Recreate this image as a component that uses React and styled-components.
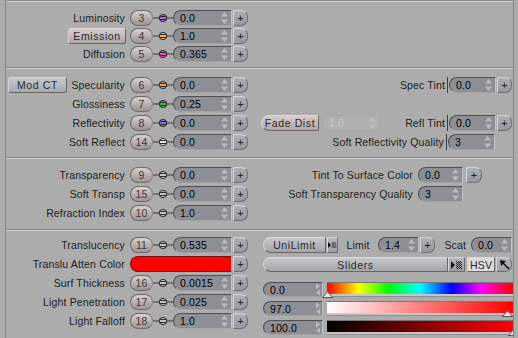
import React from "react";
import styled, { createGlobalStyle } from "styled-components";

const GlobalStyle = createGlobalStyle`
  html, body {
    margin: 0;
    padding: 0;
    background: #acacac;
  }
  body {
    font-family: "Liberation Sans", Arial, sans-serif;
    font-size: 10.5px;
    letter-spacing: 0.15px;
    color: #1c1c1c;
  }
`;

const Panel = styled.div`
  margin-left: 5px;
  width: 509px;
  height: 338px;
  box-sizing: border-box;
  border-left: 1px solid #868686;
  border-right: 1px solid #868686;
  overflow: hidden;
`;

const Section = styled.section`
  display: flex;
  align-items: flex-start;
  border-top: 1px solid #888;
  box-shadow: inset 0 1px #d0d0d0;
  padding: ${(p) => p.$pt}px 0 ${(p) => p.$pb}px;
`;

const LeftCol = styled.div`
  flex: none;
  width: 244px;
  box-sizing: border-box;
  padding-right: 2px;
  display: flex;
  flex-direction: column;
  gap: ${(p) => p.$gap}px;
`;

const RightCol = styled.div`
  flex: 1;
  box-sizing: border-box;
  padding: 0 ${(p) => p.$pr || 0}px 0 ${(p) => p.$pl || 0}px;
  display: flex;
  flex-direction: column;
  gap: ${(p) => p.$gap}px;
`;

const Row = styled.div`
  display: flex;
  align-items: center;
  justify-content: flex-end;
  height: ${(p) => p.$h || 16}px;
`;

const StartRow = styled(Row)`
  justify-content: flex-start;
`;

const Label = styled.span`
  white-space: nowrap;
  margin-right: ${(p) => (p.$mr === undefined ? 5 : p.$mr)}px;
  line-height: 16px;
`;

const FixedLabel = styled.span`
  flex: none;
  width: ${(p) => p.$w}px;
  box-sizing: border-box;
  padding-right: ${(p) => p.$pr || 0}px;
  text-align: ${(p) => p.$align || "center"};
  white-space: nowrap;
`;

const Pill = styled.div`
  flex: none;
  width: 23px;
  height: 16px;
  box-sizing: border-box;
  border-radius: 8px;
  border: 1px solid #6f6a6a;
  border-right-color: #8c8686;
  background: linear-gradient(#d8d0d0, #b4aaaa 60%, #9e9494);
  color: #3a3a3a;
  display: flex;
  align-items: center;
  justify-content: center;
  font-size: 10.5px;
`;

const Field = styled.div`
  flex: none;
  width: ${(p) => p.$w}px;
  height: ${(p) => p.$h || 16}px;
  box-sizing: border-box;
  border-radius: 8px 0 0 8px;
  border: 1px solid #4e5054;
  border-right-color: #c2c2c2;
  border-bottom-color: #a2a2a4;
  background: ${(p) => (p.$disabled ? "#b0b0b0" : "#8d8f94")};
  ${(p) => p.$disabled && "border-color: #a8a8a8; border-right-color: #a8a8a8;"}
  color: ${(p) => (p.$disabled ? "#cbcbcb" : "#000")};
  display: flex;
  align-items: center;
  padding-left: 6px;
  margin-right: ${(p) => p.$mr || 0}px;
  margin-left: ${(p) => p.$ml || 0}px;
`;

const FieldValue = styled.span`
  flex: 1;
  white-space: nowrap;
`;

const Plus = styled.div`
  flex: none;
  width: ${(p) => p.$w || 15}px;
  height: 16px;
  box-sizing: border-box;
  border-radius: 2px 7px 7px 2px;
  border: 1px solid #6c6e72;
  border-top-color: #d6d6d8;
  border-left-color: #d6d6d8;
  background: linear-gradient(#aeb0b4, #96989c);
  color: #222;
  display: flex;
  align-items: center;
  justify-content: center;
  font-size: 11px;
  margin-left: ${(p) => (p.$ml === undefined ? 1 : p.$ml)}px;
`;

const Spacer = styled.div`
  flex: none;
  width: ${(p) => p.$w || 0}px;
`;

const Bracket = styled.div`
  flex: none;
  width: 1px;
  height: 16px;
  background: #3c3c3c;
  margin-right: 1px;
`;

const Swatch = styled.div`
  flex: none;
  width: 102px;
  height: 16px;
  box-sizing: border-box;
  border-radius: 8px 0 0 8px;
  border: 1px solid #7a1010;
  border-right-color: #ff9090;
  background: #ff0000;
`;

const TextButton = styled.div`
  flex: none;
  width: ${(p) => p.$w}px;
  height: ${(p) => p.$h || 16}px;
  box-sizing: border-box;
  border: 1px solid #6a6666;
  border-top-color: #e0dada;
  border-left-color: #d8d2d2;
  border-radius: ${(p) => p.$radius || "3px"};
  background: ${(p) =>
    p.$tone === "blue"
      ? "linear-gradient(#c4c8ce, #a6aab2)"
      : p.$tone === "grey"
      ? "linear-gradient(#c6c8cc, #a2a4a8)"
      : p.$tone === "light"
      ? "#dedada"
      : "linear-gradient(#d6cccc, #b0a6a6)"};
  color: #2a2a2a;
  display: flex;
  align-items: center;
  justify-content: center;
  white-space: nowrap;
  letter-spacing: ${(p) => (p.$tight ? 0.2 : 0.6)}px;
  margin-left: ${(p) => p.$ml || 0}px;
  margin-right: ${(p) => p.$mr || 0}px;
`;

const IconButton = styled.div`
  flex: none;
  width: ${(p) => p.$w}px;
  height: ${(p) => p.$h || 16}px;
  box-sizing: border-box;
  border: 1px solid #6c6e72;
  border-top-color: #d6d6d8;
  border-left-color: #d6d6d8;
  border-radius: ${(p) => p.$radius || "1px"};
  background: linear-gradient(#b6b8bc, #9c9ea2);
  display: flex;
  align-items: center;
  justify-content: center;
  margin-left: ${(p) => p.$ml || 0}px;
`;

const SliderRow = styled.div`
  display: flex;
  align-items: flex-start;
  height: 15px;
  gap: 4px;
`;

const BarWrap = styled.div`
  position: relative;
  flex: 1;
  height: 15px;
`;

const Bar = styled.div`
  height: 12px;
  box-sizing: border-box;
  border-top: 1px solid #777;
  background: ${(p) => p.$bg};
`;

const Track = styled.div`
  height: 2px;
  background: #c6c6c6;
  border-bottom: 1px solid #8e8e8e;
`;

const Marker = styled.svg`
  position: absolute;
  top: 9px;
  width: 11px;
  height: 7px;
`;

const Spin = () => (
  <svg width="9" height="14" viewBox="0 0 9 14" style={{ marginRight: 2 }}>
    <polygon points="4.5,1 8,5.5 1,5.5" fill="#b9bbbf" />
    <polygon points="1,8.5 8,8.5 4.5,13" fill="#b9bbbf" />
  </svg>
);

const SideArrows = () => (
  <svg width="7" height="13" viewBox="0 0 7 13" style={{ marginRight: 1 }}>
    <polygon points="2,0.5 6,3.5 2,6.5" fill="#b9bbbf" />
    <polygon points="6,6.5 2,9.5 6,12.5" fill="#b9bbbf" />
  </svg>
);

const Connector = ({ color }) => (
  <svg width="20" height="16" viewBox="0 0 20 16" style={{ flex: "none" }}>
    <line x1="0" y1="8" x2="20" y2="8" stroke="#3a3a3a" strokeWidth="1" />
    <ellipse cx="10" cy="8" rx="3.8" ry="3.6" fill={color} stroke="#2c2c2c" strokeWidth="1" />
    <line x1="6.5" y1="6.5" x2="13.5" y2="6.5" stroke="#2c2c2c" strokeWidth="1" />
    <line x1="6.5" y1="9.5" x2="13.5" y2="9.5" stroke="#2c2c2c" strokeWidth="1" />
  </svg>
);

const ScopeIcon = () => {
  const dots = [];
  for (let x = 0; x < 6; x++)
    for (let y = 0; y < 8; y++)
      if ((x + y) % 2 === 0)
        dots.push(<rect key={`${x}-${y}`} x={5 + x} y={1 + y} width="1" height="1" fill="#222" />);
  return (
    <svg width="12" height="10" viewBox="0 0 12 10">
      <polygon points="0,1 4,5 0,9" fill="#111" />
      {dots}
    </svg>
  );
};

const PickIcon = () => (
  <svg width="11" height="11" viewBox="0 0 11 11">
    <line x1="10" y1="10" x2="3" y2="3" stroke="#111" strokeWidth="1.6" />
    <polygon points="1,1 7,2 2,7" fill="#111" />
  </svg>
);

const ValueField = ({ value, w, h, disabled, mr, ml }) => (
  <Field $w={w} $h={h} $disabled={disabled} $mr={mr} $ml={ml}>
    <FieldValue>{value}</FieldValue>
    <Spin />
  </Field>
);

const Channel = ({ label, pre, num, color, value }) => (
  <Row>
    {pre}
    {label && <Label>{label}</Label>}
    <Pill>{num}</Pill>
    <Connector color={color} />
    <ValueField value={value} w={59} />
    <Plus>+</Plus>
  </Row>
);

const Slider = ({ value, pct, bg }) => (
  <SliderRow>
    <Field $w={60} $h={15}>
      <FieldValue>{value}</FieldValue>
      <SideArrows />
    </Field>
    <BarWrap>
      <Bar $bg={bg} />
      <Track />
      <Marker viewBox="0 0 11 7" style={{ left: `calc(${pct}% - 5px)` }}>
        <polygon points="0.5,6.5 5.5,0.5 10.5,6.5" fill="#e4e4e4" stroke="#555" strokeWidth="1" />
      </Marker>
    </BarWrap>
  </SliderRow>
);

const grey = "#c4c4c4";

export default function App() {
  return (
    <>
      <GlobalStyle />
      <Panel>
        <Section $pt={9} $pb={5}>
          <LeftCol $gap={2}>
            <Channel label="Luminosity" num="3" color="#b860e8" value="0.0" />
            <Channel
              pre={<TextButton $w={58} $mr={4}>Emission</TextButton>}
              num="4"
              color="#ecb868"
              value="1.0"
            />
            <Channel label="Diffusion" num="5" color="#e850b8" value="0.365" />
          </LeftCol>
          <RightCol $gap={2} />
        </Section>

        <Section $pt={9} $pb={7}>
          <LeftCol $gap={3}>
            <Row>
              <TextButton $w={59} $tone="blue" $ml={2} style={{ marginRight: "auto" }}>
                Mod CT
              </TextButton>
              <Label>Specularity</Label>
              <Pill>6</Pill>
              <Connector color="#ec9a6a" />
              <ValueField value="0.0" w={59} />
              <Plus>+</Plus>
            </Row>
            <Channel label="Glossiness" num="7" color="#40b450" value="0.25" />
            <Channel label="Reflectivity" num="8" color="#7878d8" value="0.0" />
            <Channel label="Soft Reflect" num="14" color="#e6e6e6" value="0.0" />
          </LeftCol>
          <RightCol $gap={3} $pr={1}>
            <Row>
              <Label $mr={2}>Spec Tint</Label>
              <Bracket />
              <ValueField value="0.0" w={47} />
              <Plus>+</Plus>
            </Row>
            <Row />
            <Row>
              <TextButton $w={58} $ml={11} $radius="8px 2px 2px 8px">Fade Dist</TextButton>
              <ValueField value="1.0" w={58} disabled ml={3} />
              <Spacer style={{ marginRight: "auto" }} />
              <Label $mr={2}>Refl Tint</Label>
              <Bracket />
              <ValueField value="0.0" w={47} />
              <Plus>+</Plus>
            </Row>
            <Row>
              <Label $mr={2}>Soft Reflectivity Quality</Label>
              <Bracket />
              <ValueField value="3" w={47} />
              <Spacer $w={17} />
            </Row>
          </RightCol>
        </Section>

        <Section $pt={9} $pb={8}>
          <LeftCol $gap={3}>
            <Channel label="Transparency" num="9" color={grey} value="0.0" />
            <Channel label="Soft Transp" num="15" color={grey} value="0.0" />
            <Channel label="Refraction Index" num="10" color={grey} value="1.0" />
          </LeftCol>
          <RightCol $gap={3} $pr={31}>
            <Row>
              <Label>Tint To Surface Color</Label>
              <ValueField value="0.0" w={45} />
              <Plus $w={16} $ml={3}>+</Plus>
            </Row>
            <Row>
              <Label>Soft Transparency Quality</Label>
              <ValueField value="3" w={45} />
              <Spacer $w={19} />
            </Row>
          </RightCol>
        </Section>

        <Section $pt={7} $pb={3}>
          <LeftCol $gap={3}>
            <Channel label="Translucency" num="11" color={grey} value="0.535" />
            <Row>
              <Label>Translu Atten Color</Label>
              <Swatch />
              <Plus>+</Plus>
            </Row>
            <Channel label="Surf Thickness" num="16" color={grey} value="0.0015" />
            <Channel label="Light Penetration" num="17" color={grey} value="0.025" />
            <Channel label="Light Falloff" num="18" color={grey} value="1.0" />
          </LeftCol>
          <RightCol $gap={4} $pl={13}>
            <StartRow>
              <TextButton $w={63} $tone="grey" $radius="8px 1px 1px 8px">UniLimit</TextButton>
              <IconButton $w={11} $ml={1}><ScopeIcon /></IconButton>
              <FixedLabel $w={40}>Limit</FixedLabel>
              <ValueField value="1.4" w={41} />
              <Plus>+</Plus>
              <FixedLabel $w={36} $align="right" $pr={5}>Scat</FixedLabel>
              <ValueField value="0.0" w={41} />
            </StartRow>
            <StartRow $h={15}>
              <TextButton $w={185} $h={15} $tone="grey" $radius="8px 1px 1px 8px">Sliders</TextButton>
              <IconButton $w={17} $h={15}><ScopeIcon /></IconButton>
              <TextButton $w={28} $h={15} $tone="light" $tight $ml={2} $radius="1px">HSV</TextButton>
              <IconButton $w={16} $h={15} $ml={1} $radius="1px 7px 7px 1px"><PickIcon /></IconButton>
            </StartRow>
            <Row $h={2} />
            <Slider
              value="0.0"
              pct={0}
              bg="linear-gradient(to right, #f00, #ff0 17%, #0f0 33%, #0ff 50%, #00f 67%, #f0f 83%, #f00)"
            />
            <Slider value="97.0" pct={97} bg="linear-gradient(to right, #fff, #f00)" />
            <Slider value="100.0" pct={100} bg="linear-gradient(to right, #000, #f00)" />
          </RightCol>
        </Section>
        <Section $pt={0} $pb={0} />
      </Panel>
    </>
  );
}
